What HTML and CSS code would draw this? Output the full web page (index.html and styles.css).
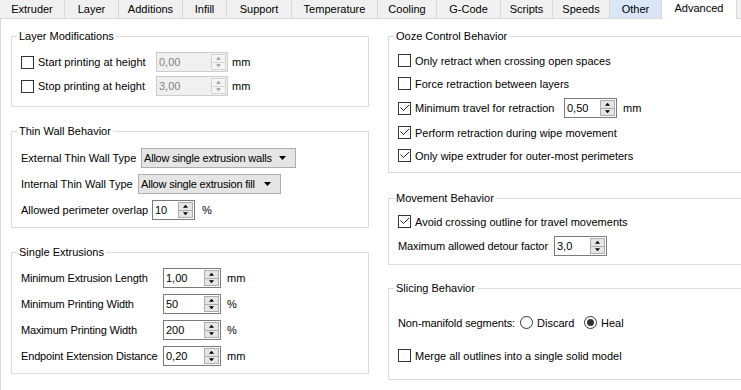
FILE: index.html
```html
<!DOCTYPE html>
<html>
<head>
<meta charset="utf-8">
<title>Advanced</title>
<link rel="stylesheet" href="styles.css">
</head>
<body>
<div class="tabbar">
  <div class="tab t-extruder">Extruder</div>
  <div class="tab t-layer">Layer</div>
  <div class="tab t-additions">Additions</div>
  <div class="tab t-infill">Infill</div>
  <div class="tab t-support">Support</div>
  <div class="tab t-temperature">Temperature</div>
  <div class="tab t-cooling">Cooling</div>
  <div class="tab t-gcode">G-Code</div>
  <div class="tab t-scripts">Scripts</div>
  <div class="tab t-speeds">Speeds</div>
  <div class="tab t-other">Other</div>
  <div class="tab t-advanced">Advanced</div>
  <div class="tab t-rest"></div>
</div>
<div class="pane">
  <div class="col">
    <fieldset class="group g-layer">
      <legend>Layer Modifications</legend>
      <div class="body grid-layer">
        <label class="check"><span class="cb"></span>Start printing at height</label>
        <div class="spin disabled"><span class="val">0,00</span><span class="btns"><span class="up"><i></i></span><span class="dn"><i></i></span></span></div>
        <span class="unit">mm</span>
        <label class="check"><span class="cb"></span>Stop printing at height</label>
        <div class="spin disabled"><span class="val">3,00</span><span class="btns"><span class="up"><i></i></span><span class="dn"><i></i></span></span></div>
        <span class="unit">mm</span>
      </div>
    </fieldset>

    <fieldset class="group g-thin">
      <legend>Thin Wall Behavior</legend>
      <div class="body rows-thin">
        <div class="row20">
          <span class="lbl lbl-ext">External Thin Wall Type</span>
          <div class="combo combo-ext"><span class="txt">Allow single extrusion walls</span><span class="arrow"></span></div>
        </div>
        <div class="row20">
          <span class="lbl lbl-int">Internal Thin Wall Type</span>
          <div class="combo combo-int"><span class="txt">Allow single extrusion fill</span><span class="arrow"></span></div>
        </div>
        <div class="row20">
          <span class="lbl lbl-ovl">Allowed perimeter overlap</span>
          <div class="spin spin-ovl"><span class="val">10</span><span class="btns"><span class="up"><i></i></span><span class="dn"><i></i></span></span></div>
          <span class="unit unit-pct">%</span>
        </div>
      </div>
    </fieldset>

    <fieldset class="group g-single">
      <legend>Single Extrusions</legend>
      <div class="body grid-single">
        <span class="lbl">Minimum Extrusion Length</span>
        <div class="spin"><span class="val">1,00</span><span class="btns"><span class="up"><i></i></span><span class="dn"><i></i></span></span></div>
        <span class="unit">mm</span>
        <span class="lbl">Minimum Printing Width</span>
        <div class="spin"><span class="val">50</span><span class="btns"><span class="up"><i></i></span><span class="dn"><i></i></span></span></div>
        <span class="unit">%</span>
        <span class="lbl">Maximum Printing Width</span>
        <div class="spin"><span class="val">200</span><span class="btns"><span class="up"><i></i></span><span class="dn"><i></i></span></span></div>
        <span class="unit">%</span>
        <span class="lbl">Endpoint Extension Distance</span>
        <div class="spin"><span class="val">0,20</span><span class="btns"><span class="up"><i></i></span><span class="dn"><i></i></span></span></div>
        <span class="unit">mm</span>
      </div>
    </fieldset>
  </div>

  <div class="col">
    <fieldset class="group g-ooze">
      <legend>Ooze Control Behavior</legend>
      <div class="body rows">
        <label class="check row17"><span class="cb"></span>Only retract when crossing open spaces</label>
        <label class="check row17"><span class="cb"></span>Force retraction between layers</label>
        <div class="row20">
          <label class="check check-travel"><span class="cb on"><svg width="11" height="11" viewBox="0 0 11 11"><polyline points="1.5,4.5 4.5,7.5 10,2" fill="none" stroke="#222" stroke-width="1"/></svg></span>Minimum travel for retraction</label>
          <div class="spin spin-53"><span class="val">0,50</span><span class="btns"><span class="up"><i></i></span><span class="dn"><i></i></span></span></div>
          <span class="unit unit-travel">mm</span>
        </div>
        <label class="check row17"><span class="cb on"><svg width="11" height="11" viewBox="0 0 11 11"><polyline points="1.5,4.5 4.5,7.5 10,2" fill="none" stroke="#222" stroke-width="1"/></svg></span>Perform retraction during wipe movement</label>
        <label class="check row17"><span class="cb on"><svg width="11" height="11" viewBox="0 0 11 11"><polyline points="1.5,4.5 4.5,7.5 10,2" fill="none" stroke="#222" stroke-width="1"/></svg></span>Only wipe extruder for outer-most perimeters</label>
      </div>
    </fieldset>

    <fieldset class="group g-move">
      <legend>Movement Behavior</legend>
      <div class="body rows">
        <label class="check row17"><span class="cb on"><svg width="11" height="11" viewBox="0 0 11 11"><polyline points="1.5,4.5 4.5,7.5 10,2" fill="none" stroke="#222" stroke-width="1"/></svg></span>Avoid crossing outline for travel movements</label>
        <div class="row20">
          <span class="lbl lbl-detour">Maximum allowed detour factor</span>
          <div class="spin spin-53"><span class="val">3,0</span><span class="btns"><span class="up"><i></i></span><span class="dn"><i></i></span></span></div>
        </div>
      </div>
    </fieldset>

    <fieldset class="group g-slice">
      <legend>Slicing Behavior</legend>
      <div class="body rows rows-slice">
        <div class="row17">
          <span class="lbl lbl-nonman">Non-manifold segments:</span>
          <label class="radio opt-discard"><span class="rb"></span>Discard</label>
          <label class="radio"><span class="rb on"><span class="dot"></span></span>Heal</label>
        </div>
        <label class="check row17"><span class="cb"></span>Merge all outlines into a single solid model</label>
      </div>
    </fieldset>
  </div>
</div>
</body>
</html>
```

FILE: styles.css
```css
* { box-sizing: border-box; }

html, body {
  margin: 0;
  padding: 0;
}

body {
  width: 741px;
  height: 390px;
  overflow: hidden;
  background: #ffffff;
  font-family: "Liberation Sans", Arial, sans-serif;
  font-size: 11px;
  color: #000000;
}

/* ---------- tab bar ---------- */
.tabbar {
  display: flex;
  height: 19px;
}

.tab {
  flex: none;
  height: 19px;
  padding-top: 1px;
  line-height: 17px;
  text-align: center;
  white-space: nowrap;
  background: #f0f0f0;
  border-right: 1px solid #d9d9d9;
  border-bottom: 1px solid #d9d9d9;
}

.t-extruder { width: 65px; }
.t-layer { width: 54px; }
.t-additions { width: 64px; }
.t-infill { width: 44px; }
.t-support { width: 65px; }
.t-temperature { width: 86px; }
.t-cooling { width: 59px; }
.t-gcode { width: 64px; }
.t-scripts { width: 52px; }
.t-speeds { width: 57px; }
.t-other { width: 52px; background: #d8e6f5; }
.t-advanced {
  width: 75px;
  padding-top: 0;
  background: #ffffff;
  border-bottom-color: #ffffff;
}
.t-rest { flex: 1; border-right: none; }

/* ---------- pane ---------- */
.pane {
  display: grid;
  grid-template-columns: 358px 358px;
  column-gap: 19px;
  align-items: start;
  height: 371px;
  padding-left: 10px;
  border-left: 1px solid #d9d9d9;
}

.col {
  display: flex;
  flex-direction: column;
}

.group {
  margin: 0;
  padding: 0;
  min-width: 0;
  border: 1px solid #dcdcdc;
}

.group legend {
  margin-left: 5px;
  padding: 0 2px;
  line-height: 13px;
  font-size: 11px;
}

.g-layer { margin-top: 11px; }
.g-thin { margin-top: 18px; }
.g-single { margin-top: 18px; }
.g-ooze { margin-top: 11px; }
.g-move { margin-top: 19px; }
.g-slice { margin-top: 17px; }

.body { padding-left: 9px; padding-right: 9px; }

.g-layer .body { padding-top: 9px; padding-bottom: 10px; }
.g-thin .body { padding-top: 10px; padding-bottom: 7px; }
.g-single .body { padding-top: 9px; padding-bottom: 7px; }
.g-ooze .body { padding-top: 9px; padding-bottom: 8px; }
.g-move .body { padding-top: 8px; padding-bottom: 8px; }
.g-slice .body { padding-top: 19px; padding-bottom: 15px; }

.grid-layer {
  display: grid;
  grid-template-columns: 135px 72px auto;
  row-gap: 4px;
  align-items: center;
}

.grid-single {
  display: grid;
  grid-template-columns: 142px 58px auto;
  row-gap: 6px;
  align-items: center;
}

.grid-single .lbl { letter-spacing: -0.15px; }

.rows-thin, .rows {
  display: flex;
  flex-direction: column;
  row-gap: 6px;
}

.rows-slice { row-gap: 16px; }

.row20 {
  display: flex;
  align-items: center;
  height: 20px;
}

.row17 {
  display: flex;
  align-items: center;
  height: 17px;
}

.lbl { flex: none; white-space: nowrap; }
.lbl-ext { width: 120px; }
.lbl-int { width: 117px; }
.lbl-ovl { width: 131px; }
.lbl-detour { width: 156px; letter-spacing: -0.1px; }
.lbl-nonman { width: 122px; letter-spacing: -0.1px; }

.unit { margin-left: 4px; white-space: nowrap; }
.grid-single .unit { margin-left: 6px; }
.unit-pct { margin-left: 7px; }
.unit-travel { margin-left: 6px; }

/* ---------- checkbox / radio ---------- */
.check, .radio {
  display: flex;
  align-items: center;
  white-space: nowrap;
}

.cb {
  flex: none;
  display: flex;
  width: 13px;
  height: 13px;
  margin-right: 4px;
  border: 1px solid #333333;
  background: #ffffff;
}

.check-travel { width: 166px; flex: none; }

.rb {
  flex: none;
  display: flex;
  align-items: center;
  justify-content: center;
  width: 13px;
  height: 13px;
  margin-right: 4px;
  border: 1px solid #333333;
  border-radius: 50%;
  background: #ffffff;
}

.rb .dot {
  width: 7px;
  height: 7px;
  border-radius: 50%;
  background: #333333;
}

.opt-discard { width: 64px; flex: none; }

/* ---------- spin box ---------- */
.spin {
  flex: none;
  display: flex;
  height: 20px;
  border: 1px solid #7a7a7a;
  background: #ffffff;
}

.spin .val {
  flex: 1;
  padding-left: 2px;
  line-height: 18px;
  white-space: nowrap;
}

.spin .btns {
  flex: none;
  display: flex;
  flex-direction: column;
  width: 15px;
  margin: 1px;
  border: 1px solid #adadad;
  background: #e5e5e5;
}

.spin .btns > span {
  flex: 1;
  display: flex;
  align-items: center;
  justify-content: center;
}

.spin .btns .dn { border-top: 1px solid #adadad; }

.spin .btns i {
  display: block;
  width: 5px;
  height: 3px;
  background: #000000;
}

.spin .btns .up i { clip-path: polygon(50% 0, 100% 100%, 0 100%); }
.spin .btns .dn i { clip-path: polygon(0 0, 100% 0, 50% 100%); }

.spin.disabled {
  border-color: #cccccc;
  background: #f0f0f0;
  color: #838383;
}

.spin.disabled .btns {
  border-color: #d4d4d4;
  background: #f4f4f4;
}

.spin.disabled .btns .dn { border-top-color: #d4d4d4; }
.spin.disabled .btns i { background: #a0a0a0; }

.spin-ovl { width: 43px; }
.spin-53 { width: 53px; }

/* ---------- combo box ---------- */
.combo {
  flex: none;
  display: flex;
  align-items: center;
  height: 20px;
  padding-left: 2px;
  border: 1px solid #adadad;
  background: #e5e5e5;
}

.combo .txt { flex: 1; white-space: nowrap; letter-spacing: -0.2px; }

.combo .arrow {
  flex: none;
  width: 7px;
  height: 4px;
  margin-right: 9px;
  background: #000000;
  clip-path: polygon(0 0, 100% 0, 50% 100%);
}

.combo-ext { width: 155px; }
.combo-int { width: 143px; }
```
